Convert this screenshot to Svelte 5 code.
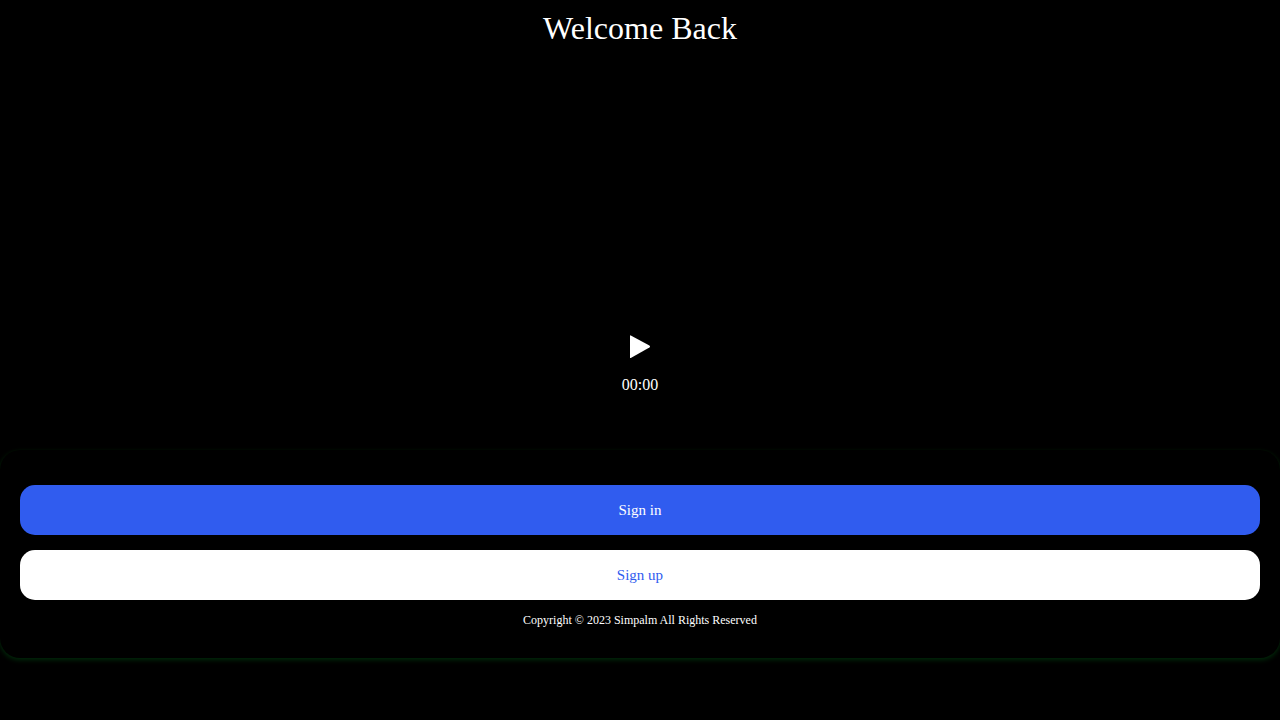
<script>
  let playing = $state(false);
</script>

<main class="page">
  <h1>Welcome Back</h1>

  <section class="player" aria-label="Video player">
    <button class="play" type="button" aria-label="Play" aria-pressed={playing} onclick={() => (playing = !playing)}>
      <svg viewBox="0 0 20 24" width="20" height="24" aria-hidden="true">
        <path d="M0 1Q0 0 .8 .4L19.4 10.6Q20.6 11.5 19.4 12.4L.8 22.9Q0 23.3 0 22.5Z" fill="#fff" />
      </svg>
    </button>
    <time>00:00</time>
  </section>

  <section class="card">
    <button class="action primary" type="button">Sign in</button>
    <button class="action secondary" type="button">Sign up</button>
    <p>Copyright © 2023 Simpalm All Rights Reserved</p>
  </section>
</main>

<style>
  :global(body) {
    background: #000;
  }

  .page {
    display: flex;
    flex-direction: column;
    min-height: 100vh;
    box-sizing: border-box;
    padding-bottom: 62px;
    color: #fff;
    font-family: "Liberation Serif", "Times New Roman", serif;
    font-size: 16px;
  }

  h1 {
    margin: 0;
    padding: 10px 0;
    font-size: 32px;
    font-weight: 400;
    line-height: 36px;
    text-align: center;
  }

  .player {
    flex: 1;
    display: flex;
    flex-direction: column;
    align-items: center;
    justify-content: flex-end;
    gap: 16px;
    padding-bottom: 55px;
  }

  .play {
    display: flex;
    padding: 0;
    border: 0;
    background: none;
    cursor: pointer;
  }

  time {
    line-height: 20px;
  }

  .card {
    display: flex;
    flex-direction: column;
    gap: 15px;
    padding: 35px 20px 30px;
    border-radius: 20px;
    background: #000;
    box-shadow: 0 2px 5px #002a0a, 0 0 2px #000a03;
  }

  .action {
    height: 50px;
    border: 0;
    border-radius: 15px;
    font-family: inherit;
    font-size: 15px;
    cursor: pointer;
  }

  .primary {
    background: #305cef;
    color: #fff;
  }

  .secondary {
    background: #fff;
    color: #305cef;
  }

  p {
    margin: 0;
    padding-bottom: 3px;
    font-size: 12px;
    line-height: 10px;
    text-align: center;
  }
</style>
